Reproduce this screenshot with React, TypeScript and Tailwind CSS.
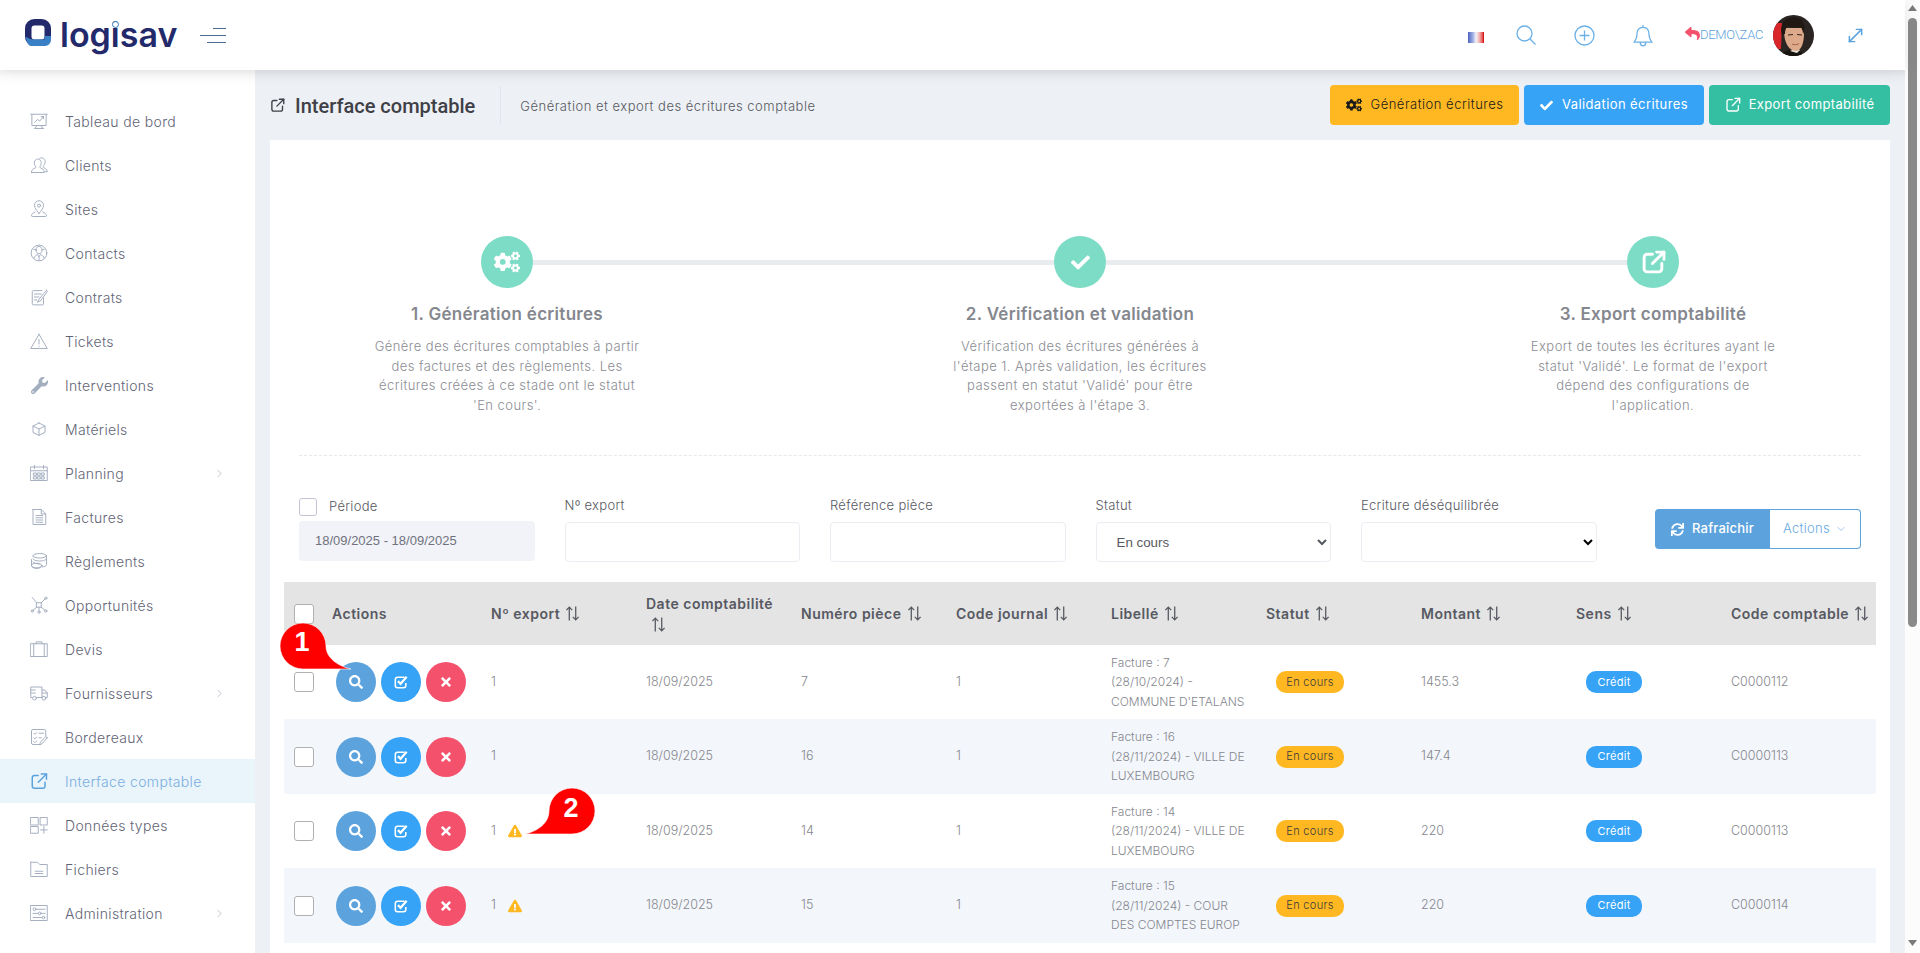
import { ChevronDown, ChevronRight, MoveDiagonal } from 'lucide-react'
import {
  FaCheck,
  FaCogs,
  FaExclamationTriangle,
  FaReply,
  FaSearch,
  FaSync,
  FaTimes,
  FaWrench,
} from 'react-icons/fa'
import type { ReactNode } from 'react'

function Thin({ children }: { children: ReactNode }) {
  return (
    <svg viewBox="0 0 24 24" className="w-[18px] h-[20px] shrink-0" fill="none" stroke="#a3aebf" strokeWidth={1.3} strokeLinecap="round" strokeLinejoin="round">
      {children}
    </svg>
  )
}

function ExternalIcon({ className, sw = 2.4 }: { className: string; sw?: number }) {
  return (
    <svg viewBox="0 0 24 24" className={className} fill="none" stroke="currentColor" strokeWidth={sw} strokeLinecap="round" strokeLinejoin="round">
      <path d="M11 4H6a3 3 0 0 0-3 3v11a3 3 0 0 0 3 3h11a3 3 0 0 0 3-3v-5" />
      <path d="M22 2 11 13" />
      <path d="M15 2h7v7" />
    </svg>
  )
}

function CheckSquareIcon() {
  return (
    <svg viewBox="0 0 16 16" className="w-[14px] h-[14px]" fill="none" stroke="currentColor">
      <path d="M12 2.500H4A2.500 2.500 0 0 0 1.500 5v7A2.500 2.500 0 0 0 4 14.500h7a2.500 2.500 0 0 0 2.500-2.500V9" strokeWidth={1.8} />
      <path d="m4.500 7 3 3 7-8" strokeWidth={2.6} />
    </svg>
  )
}

const sideIcons: Record<string, ReactNode> = {
  board: (
    <Thin>
      <path d="M1 3h22M2.500 3v15h19V3M9 18l-2 4M15 18l2 4M6 22h12" />
      <path d="m6 14 4-4 3 2 5-6M15 6h3v3" />
    </Thin>
  ),
  clients: (
    <Thin>
      <path d="M2 22c0-4 2-5 5-6 1-1 1-2 0-3-2-2-2-8 3-9 5 0 6 6 4 9-1 1-1 2 0 3 3 1 5 2 5 6H2Z" />
      <path d="M13 3c4-2 8 1 7 6-.3 2-1 3-2 4s0 2 1 3c2 1 4 2 4 5h-3" />
    </Thin>
  ),
  sites: (
    <Thin>
      <path d="M12 18c-3-4-6-7-6-11a6 6 0 0 1 12 0c0 4-3 7-6 11Z" />
      <circle cx="12" cy="7.500" r="2" />
      <path d="M7 16c-3 1-5 3-5 5 0 1 1 1 2 1h16c1 0 2 0 2-1 0-2-2-4-5-5" />
    </Thin>
  ),
  contacts: (
    <Thin>
      <circle cx="12" cy="12" r="10.500" />
      <path d="M8 8c0-3 2-5 4-5s4 2 4 5-2 5-4 5-4-2-4-5ZM5 19c1-3 3-4 5-5l2 3 2-3c2 1 4 2 5 5M12 17v5M5 7l3 1M19 7l-3 1" />
    </Thin>
  ),
  contracts: (
    <Thin>
      <path d="M18 13v8a1.500 1.500 0 0 1-1.500 1.500h-12A1.500 1.500 0 0 1 3 21V5a1.500 1.500 0 0 1 1.500-1.500H16" />
      <path d="M6 8h9M6 12h6M6 16h3M22 3l-10 12-2 4 4-2L23 5l-1-2Z" />
    </Thin>
  ),
  tickets: (
    <Thin>
      <path d="M12 3 1 22h22L12 3Z" />
      <path d="M12 10v6M12 19v.4" />
    </Thin>
  ),
  material: (
    <Thin>
      <path d="m12 4 8 4v8.500l-8 4-8-4V8l8-4Z" />
      <path d="m4 8 8 4 8-4M12 12v8.500" />
    </Thin>
  ),
  planning: (
    <Thin>
      <path d="M1 4h22v18H1zM1 9h22M6 2v4M18 2v4" />
      <path d="M5 12h3.500v3H5zM10.200 12h3.500v3h-3.500zM15.500 12H19v3h-3.500zM5 17h3.500v3H5zM10.200 17h3.500v3h-3.500zM15.500 17H19v3h-3.500z" />
    </Thin>
  ),
  bills: (
    <Thin>
      <path d="M4 2h11l6 6v14H4V2Z" />
      <path d="M15 2v6h6M8 10h9M8 13h9M8 16h9M8 19h9" />
    </Thin>
  ),
  payments: (
    <Thin>
      <ellipse cx="13" cy="5" rx="9" ry="3" />
      <path d="M22 5v12c0 1.500-3 3-6 3M4 6v0M4 9c0 1.500 4 3 9 3s9-1.500 9-3M4 13c0 1.500 4 3 9 3" />
      <ellipse cx="9" cy="18" rx="7" ry="3" />
      <path d="M2 10v8c0 2 3 4 7 4s7-2 7-4" />
    </Thin>
  ),
  network: (
    <Thin>
      <rect x="9" y="9" width="6" height="6" />
      <circle cx="21" cy="3" r="1.500" />
      <circle cx="3" cy="20" r="1.500" />
      <circle cx="21" cy="20" r="1.500" />
      <circle cx="12" cy="21.500" r="1.500" />
      <path d="m15 9 5-5M3 2l6 7M9 15l-5 4M15 15l5 4M12 15v5" />
    </Thin>
  ),
  quotes: (
    <Thin>
      <path d="M1 5h22v17H1zM5 5v17M19 5v17M8 5V2.500h8V5" />
    </Thin>
  ),
  suppliers: (
    <Thin>
      <path d="M16 18H9M3 18H1V4h15v14M16 8h4l3 4v6h-2" />
      <circle cx="6" cy="19" r="2.500" />
      <circle cx="18.500" cy="19" r="2.500" />
      <path d="M1 8h6M1 12h6M16 12h7" />
    </Thin>
  ),
  slips: (
    <Thin>
      <path d="M21 11V4a2 2 0 0 0-2-2H4a2 2 0 0 0-2 2v16a2 2 0 0 0 2 2h9" />
      <path d="m5 7 1.500 1.500L9 6M12 7h6M5 13l1.500 1.500L9 12M12 13h3M5 18l1.500 1.500L9 17" />
      <path d="m23 13-7 8-3 1.500.8-3.500 7-7.500 2.200 1.500Z" />
    </Thin>
  ),
  types: (
    <Thin>
      <path d="M1 2h10v10H1zM14 2h9v10h-9zM1 14h10v9H1zM18.500 14v9M14 18.500h9" />
    </Thin>
  ),
  files: (
    <Thin>
      <path d="M1 3h9l3 3h10v16H1V3Z" />
      <path d="M7 15h10M7 18h10" />
    </Thin>
  ),
  admin: (
    <Thin>
      <path d="M1 2h22v20H1z" />
      <circle cx="6" cy="7" r="1.800" />
      <circle cx="13" cy="12.500" r="1.800" />
      <circle cx="18" cy="18" r="1.800" />
      <path d="M8 7h12M4 12.500h7M15 12.500h5M4 18h12" />
    </Thin>
  ),
}

const sideItems = [
  { label: 'Tableau de bord', icon: 'board' },
  { label: 'Clients', icon: 'clients' },
  { label: 'Sites', icon: 'sites' },
  { label: 'Contacts', icon: 'contacts' },
  { label: 'Contrats', icon: 'contracts' },
  { label: 'Tickets', icon: 'tickets' },
  { label: 'Interventions', icon: 'wrench' },
  { label: 'Matériels', icon: 'material' },
  { label: 'Planning', icon: 'planning', more: true },
  { label: 'Factures', icon: 'bills' },
  { label: 'Règlements', icon: 'payments' },
  { label: 'Opportunités', icon: 'network' },
  { label: 'Devis', icon: 'quotes' },
  { label: 'Fournisseurs', icon: 'suppliers', more: true },
  { label: 'Bordereaux', icon: 'slips' },
  { label: 'Interface comptable', icon: 'external', active: true },
  { label: 'Données types', icon: 'types' },
  { label: 'Fichiers', icon: 'files' },
  { label: 'Administration', icon: 'admin', more: true },
]

const columns = ['Nº export', 'Date comptabilité', 'Numéro pièce', 'Code journal', 'Libellé', 'Statut', 'Montant', 'Sens', 'Code comptable']

const rows = [
  { warn: false, piece: '7', label: ['Facture : 7', '(28/10/2024) -', "COMMUNE D'ETALANS"], amount: '1455.3', code: 'C0000112', h: 'h-[74px]' },
  { warn: false, piece: '16', label: ['Facture : 16', '(28/11/2024) - VILLE DE', 'LUXEMBOURG'], amount: '147.4', code: 'C0000113', h: 'h-[75px]' },
  { warn: true, piece: '14', label: ['Facture : 14', '(28/11/2024) - VILLE DE', 'LUXEMBOURG'], amount: '220', code: 'C0000113', h: 'h-[74px]' },
  { warn: true, piece: '15', label: ['Facture : 15', '(28/11/2024) - COUR', 'DES COMPTES EUROP'], amount: '220', code: 'C0000114', h: 'h-[75px]' },
]

const steps = [
  {
    title: '1. Génération écritures',
    lines: ['Génère des écritures comptables à partir', 'des factures et des règlements. Les', 'écritures créées à ce stade ont le statut', "'En cours'."],
  },
  {
    title: '2. Vérification et validation',
    lines: ["Vérification des écritures générées à", "l'étape 1. Après validation, les écritures", "passent en statut 'Validé' pour être", "exportées à l'étape 3."],
  },
  {
    title: '3. Export comptabilité',
    lines: ["Export de toutes les écritures ayant le", "statut 'Validé'. Le format de l'export", 'dépend des configurations de', "l'application."],
  },
]

function SortIcon() {
  return (
    <svg viewBox="0 0 14 14" className="inline-block w-[15px] h-[15px] ml-[5px] align-[-2px]" fill="none" stroke="#575962" strokeWidth={1.2}>
      <path d="M4 13.500V1M1.300 3.800 4 1l2.700 2.800M10 .5V13M7.300 10.200 10 13l2.700-2.800" />
    </svg>
  )
}

function Filter({ label, children }: { label: string; children: ReactNode }) {
  return (
    <div className="w-[235.500px] shrink-0">
      <div className="h-[18px] mb-[6px] text-[13px] leading-[15px] font-light tracking-[0.3px] text-[#575962]">{label}</div>
      {children}
    </div>
  )
}

function Avatar() {
  return (
    <div className="w-[41px] h-[41px] rounded-full overflow-hidden shrink-0">
      <svg viewBox="0 0 41 41" className="w-full h-full">
        <rect width="41" height="41" fill="#2a2422" />
        <path d="M0 8h9l-1 26H0z" fill="#d8262a" />
        <path d="M8 41c2-5 6-6 12-6s9 2 11 6z" fill="#17130f" />
        <path d="M17 36l7 2 3-3-3-2z" fill="#e8e4de" />
        <path d="M11 16c0 10 4 20 12 20 5 0 8-8 8-17l-2-6H13z" fill="#dcaa8a" />
        <path d="M9 20c-3-10 2-17 11-18 8 0 13 5 11 14l-1 3c0-3-1-6-3-7-4 1-8 1-12-1-2 1-3 4-3 8z" fill="#211814" />
        <path d="M15 20l5-.5M24 19.500l5 .5" stroke="#3a241b" strokeWidth={1.2} />
        <path d="M19 29c2 1 5 1 7-.5" stroke="#a4604c" strokeWidth={1} fill="none" />
      </svg>
    </div>
  )
}

function Sidebar() {
  return (
    <aside className="w-[255px] shrink-0 bg-white pt-[29px] shadow-[inset_0_12px_12px_-12px_rgba(69,65,78,0.12)]">
      {sideItems.map((item) => (
        <div key={item.label} className={`h-[44px] flex items-center pl-[30px] pr-[29px] ${item.active ? 'bg-[#e9f4fb]' : ''}`}>
          <span className="w-[18px] flex justify-center shrink-0">
            {item.icon === 'wrench' ? (
              <FaWrench className="text-[#a3aebf] text-[17px]" />
            ) : item.icon === 'external' ? (
              <ExternalIcon className="w-[19px] h-[19px] text-[#5ca3dd]" sw={2} />
            ) : (
              sideIcons[item.icon]
            )}
          </span>
          <span className={`ml-[17px] flex-1 text-[14px] font-light tracking-[0.35px] ${item.active ? 'text-[#7aaee0]' : 'text-[#5f6476]'}`}>{item.label}</span>
          {item.more && <ChevronRight size={13} strokeWidth={1.3} className="text-[#a8adb8]" />}
        </div>
      ))}
    </aside>
  )
}

function Header() {
  return (
    <header className="relative z-10 h-[70px] shrink-0 bg-white flex items-center shadow-[0_1px_15px_rgba(69,65,78,0.12)]">
      <div className="flex items-center pl-[25px] w-[255px]">
        <svg viewBox="0 0 26 27" className="w-[26px] h-[27px] mb-[5px] shrink-0">
          <rect x="3.250" y="3.250" width="19.500" height="20.500" rx="6" fill="none" stroke="#232a6b" strokeWidth={6.500} />
          <path d="M6 27h14a6 6 0 0 0 6-6v-4h-6.500v3.500H9c-3 0-6-1-8-3 0 4 2 9.500 5 9.500Z" fill="#3a80c6" />
        </svg>
        <span className="relative ml-[9px] w-[116px] text-[34px] leading-[40px] font-semibold text-[#232a6b] font-[Inter,sans-serif] whitespace-nowrap">
          logisav
          <span className="absolute left-[52px] top-[6px] w-[7px] h-[7px] rounded-full bg-white border-[1.500px] border-[#3a80c6]" />
        </span>
        <svg viewBox="0 0 26 15" className="w-[26px] h-[15px] ml-[24px] shrink-0" stroke="#4d6b8f" strokeWidth={1}>
          <path d="M13 .5h13M0 7.500h26M7 14.500h19" />
        </svg>
      </div>
      <div className="flex-1 flex items-center justify-end text-[#5ca3dd]">
        <svg viewBox="0 0 16 11" className="w-[16px] h-[11px] mt-[4px] shrink-0">
          <defs>
            <linearGradient id="flag" x1="0" x2="1" y1="0" y2="0">
              <stop offset="0" stopColor="#4a63c0" />
              <stop offset="0.33" stopColor="#a8b6e6" />
              <stop offset="0.5" stopColor="#f4f4f8" />
              <stop offset="0.72" stopColor="#f2b0b0" />
              <stop offset="1" stopColor="#e02020" />
            </linearGradient>
          </defs>
          <rect width="16" height="11" fill="url(#flag)" />
          <path d="M15.500 0v11" stroke="#d01818" strokeWidth={1} />
        </svg>
        <svg viewBox="0 0 20 20" className="w-[20px] h-[20px] ml-[32px]" fill="none" stroke="#6bb0e6" strokeWidth={1.3}>
          <circle cx="8.500" cy="8.500" r="7.500" />
          <path d="m14 14 5.500 5.500" />
        </svg>
        <svg viewBox="0 0 21 21" className="w-[21px] h-[21px] ml-[38px]" fill="none" stroke="#6bb0e6" strokeWidth={1.3}>
          <circle cx="10.500" cy="10.500" r="9.500" />
          <path d="M10.500 5.500v10M5.500 10.500h10" />
        </svg>
        <svg viewBox="0 0 18 21" className="w-[20px] h-[23px] ml-[38px] mr-[-1px]" fill="none" stroke="#6bb0e6" strokeWidth={1.2}>
          <path d="M9 3c-4 0-5.500 3-5.500 6.500 0 4-1.500 5.500-2.500 7h16c-1-1.500-2.500-3-2.500-7C14.500 6 13 3 9 3ZM9 3V1M6.500 17c0 2 1 3 2.500 3s2.500-1 2.500-3" />
        </svg>
        <FaReply className="ml-[33px] text-[15px] text-[#f4516c] mb-[4px]" />
        <span className="text-[13px] font-[Roboto,sans-serif] font-light text-[#5ca3dd] mb-[1px] w-[63px] whitespace-nowrap tracking-[-0.3px]">DEMO\ZAC</span>
        <span className="ml-[10px]">
          <Avatar />
        </span>
        <MoveDiagonal size={21} strokeWidth={1.7} className="ml-[31px] mr-[39px] text-[#5ca3dd]" />
      </div>
    </header>
  )
}

function Steps() {
  return (
    <>
      <div className="flex items-center pl-[211px] pr-[211px] pt-[96px]">
        <div className="w-[52px] h-[52px] rounded-full bg-[#7ddcc6] flex items-center justify-center shrink-0">
          <FaCogs className="text-white text-[26px]" />
        </div>
        <div className="flex-1 h-[5px] bg-[#e8ecef]" />
        <div className="w-[52px] h-[52px] rounded-full bg-[#7ddcc6] flex items-center justify-center shrink-0">
          <FaCheck className="text-white text-[19px]" />
        </div>
        <div className="flex-1 h-[5px] bg-[#e8ecef]" />
        <div className="w-[52px] h-[52px] rounded-full bg-[#7ddcc6] flex items-center justify-center shrink-0 text-white">
          <ExternalIcon className="w-[25px] h-[25px]" sw={2.8} />
        </div>
      </div>
      <div className="flex justify-between px-[87px] mt-[14px]">
        {steps.map((step) => (
          <div key={step.title} className="w-[300px] text-center">
            <div className="h-[24px] leading-[24px] text-[17px] font-semibold tracking-[0.3px] text-[#85878e]">{step.title}</div>
            <div className="mt-[11px] text-[13px] leading-[19.500px] font-light tracking-[0.45px] text-[#8b8d94]">
              {step.lines.map((line) => (
                <div key={line}>{line}</div>
              ))}
            </div>
          </div>
        ))}
      </div>
    </>
  )
}

function Filters() {
  const box = 'w-full h-[40px] bg-white border border-[#ebedf2] rounded-[4px]'
  return (
    <div className="flex items-start pl-[29px] mt-[42px] gap-[30px]">
      <div className="w-[235.500px] shrink-0">
        <div className="flex items-center h-[18px]">
          <span className="w-[18px] h-[18px] border border-[#bfc3d4] rounded-[3px] bg-white" />
          <span className="ml-[12px] text-[13px] font-light tracking-[0.3px] text-[#575962]">Période</span>
        </div>
        <div className="mt-[5px] h-[40px] bg-[#f2f3f8] rounded-[4px] pl-[16px] flex items-center text-[13px] text-[#6f727d] font-['Liberation_Sans',sans-serif]">
          18/09/2025 - 18/09/2025
        </div>
      </div>
      <Filter label="Nº export">
        <input className={box} />
      </Filter>
      <Filter label="Référence pièce">
        <input className={box} />
      </Filter>
      <Filter label="Statut">
        <select defaultValue="En cours" className={`${box} pl-[16px] text-[13.330px] text-[#575962] font-['Liberation_Sans',sans-serif]`}>
          <option>En cours</option>
        </select>
      </Filter>
      <Filter label="Ecriture déséquilibrée">
        <select className={box}>
          <option></option>
        </select>
      </Filter>
      <div className="flex ml-[28.500px] mt-[11px] h-[40px] shrink-0">
        <div className="w-[115px] bg-[#5ca3dd] rounded-l-[4px] flex items-center justify-center text-white text-[13px] font-medium tracking-[0.2px]">
          <FaSync className="text-[13px] mr-[8px]" />
          Rafraîchir
        </div>
        <div className="w-[91px] border border-[#5ca3dd] border-l-0 rounded-r-[4px] flex items-center justify-center text-[#6aaae2] text-[13px] font-light tracking-[0.3px]">
          Actions
          <ChevronDown size={12} strokeWidth={1.3} className="ml-[5px]" />
        </div>
      </div>
    </div>
  )
}

function Table() {
  return (
    <div className="pl-[14px] mt-[20px]">
      <table className="w-[1592px] table-fixed border-collapse">
        <colgroup>
          <col className="w-[38px]" />
          <col className="w-[159px]" />
          {columns.map((c) => (
            <col key={c} className="w-[155px]" />
          ))}
        </colgroup>
        <thead>
          <tr className="h-[63px] bg-[#e4e4e4] text-[#575962] text-[14px] tracking-[0.5px] text-left">
            <th className="pl-[10px]">
              <span className="block w-[20px] h-[20px] bg-white border border-[#b0b0b0] rounded-[3px]" />
            </th>
            <th className="pl-[10px] font-semibold">Actions</th>
            {columns.map((c) => (
              <th key={c} className="pl-[10px] pr-[4px] font-semibold leading-[21px]">
                {c}
                <SortIcon />
              </th>
            ))}
          </tr>
        </thead>
        <tbody className="text-[12.500px] font-light text-[#85878e]">
          {rows.map((row, i) => (
            <tr key={row.piece} className={`${row.h} ${i % 2 ? 'bg-[#f3f6fb]' : 'bg-white'}`}>
              <td className="pl-[10px]">
                <span className="block w-[20px] h-[20px] bg-white border border-[#b0b0b0] rounded-[3px]" />
              </td>
              <td className="pl-[14px]">
                <div className="flex gap-[5px]">
                  <span className="w-[40px] h-[40px] rounded-full bg-[#5ca3dd] flex items-center justify-center text-white">
                    <FaSearch className="text-[14px]" />
                  </span>
                  <span className="w-[40px] h-[40px] rounded-full bg-[#36a3f7] flex items-center justify-center text-white">
                    <CheckSquareIcon />
                  </span>
                  <span className="w-[40px] h-[40px] rounded-full bg-[#f4516c] flex items-center justify-center text-white">
                    <FaTimes className="text-[14px]" />
                  </span>
                </div>
              </td>
              <td className="pl-[10px]">
                <div className="flex items-center">
                  1
                  {row.warn && <FaExclamationTriangle className="ml-[12px] text-[14px] text-[#ffb822]" />}
                </div>
              </td>
              <td className="pl-[10px]">18/09/2025</td>
              <td className="pl-[10px]">{row.piece}</td>
              <td className="pl-[10px]">1</td>
              <td className="pl-[10px] text-[12px] leading-[19.500px] whitespace-nowrap">
                {row.label.map((line) => (
                  <div key={line}>{line}</div>
                ))}
              </td>
              <td className="pl-[20px]">
                <span className="inline-flex items-center justify-center w-[68px] h-[22px] rounded-[10px] bg-[#ffb822] text-[#3b3b3b] text-[11px] font-light tracking-[0.3px]">En cours</span>
              </td>
              <td className="pl-[10px]">{row.amount}</td>
              <td className="pl-[20px]">
                <span className="inline-flex items-center justify-center w-[56px] h-[22px] rounded-[10px] bg-[#36a3f7] text-white text-[11px] font-normal tracking-[0.3px]">Crédit</span>
              </td>
              <td className="pl-[10px]">{row.code}</td>
            </tr>
          ))}
        </tbody>
      </table>
    </div>
  )
}

export default function App() {
  return (
    <div className='relative h-screen flex overflow-hidden bg-[#edf0f4] font-[Inter,"Liberation_Sans",sans-serif]'>
      <div className="flex-1 min-w-0 flex flex-col">
        <Header />
        <div className="flex-1 flex min-h-0">
          <Sidebar />
          <main className="flex-1 min-w-0 px-[15px] pt-[15px] overflow-hidden shadow-[inset_0_12px_12px_-12px_rgba(69,65,78,0.12)]">
            <div className="flex items-center h-[40px]">
              <ExternalIcon className="w-[15px] h-[15px] text-[#3f4047]" sw={2.2} />
              <h1 className="ml-[10px] mt-[1px] text-[20px] font-medium text-[#3f4047] font-[Roboto,sans-serif] whitespace-nowrap">Interface comptable</h1>
              <span className="ml-[25px] w-px h-[38px] bg-[#e2e5ec]" />
              <span className="ml-[19px] mt-[4px] flex-1 text-[13px] font-light tracking-[0.5px] text-[#575962]">Génération et export des écritures comptable</span>
              <div className="flex gap-[5px] text-[13px]">
                <div className="w-[189px] h-[40px] rounded-[4px] bg-[#ffb822] text-[#1a1a1a] flex items-center justify-center font-light tracking-[0.5px]">
                  <FaCogs className="text-[16px] mr-[9px]" />
                  Génération écritures
                </div>
                <div className="w-[180px] h-[40px] rounded-[4px] bg-[#36a3f7] text-white flex items-center justify-center tracking-[0.4px]">
                  <FaCheck className="text-[13px] mr-[9px]" />
                  Validation écritures
                </div>
                <div className="w-[181px] h-[40px] rounded-[4px] bg-[#34bfa3] text-white flex items-center justify-center tracking-[0.35px]">
                  <ExternalIcon className="w-[16px] h-[16px] mr-[8px]" sw={2} />
                  Export comptabilité
                </div>
              </div>
            </div>
            <div className="mt-[15px] bg-white w-[1620px] h-[900px]">
              <Steps />
              <div className="mx-[29px] mt-[40px] border-t border-dashed border-[#e6e8ee]" />
              <Filters />
              <Table />
            </div>
          </main>
        </div>
      </div>

      <div className="w-[15px] shrink-0 bg-[#fcfcfc] flex flex-col items-center">
        <svg viewBox="0 0 9 6" className="w-[9px] h-[6px] mt-[5px] shrink-0">
          <path d="M4.500 0 9 6H0z" fill="#7a7a7a" />
        </svg>
        <div className="w-[9px] h-[609px] mt-[7px] rounded-full bg-[#8a8a8a]" />
        <svg viewBox="0 0 9 6" className="w-[9px] h-[6px] mt-auto mb-[7px] shrink-0">
          <path d="M4.500 6 9 0H0z" fill="#7a7a7a" />
        </svg>
      </div>

      {/* numbered callouts pasted over the table */}
      <svg viewBox="0 0 1920 953" className="absolute inset-0 w-[1920px] h-[953px] pointer-events-none" fill="#ff0000">
        <path d="M351 669 303 669A23 23 0 1 1 326 646C326 658 338 666 351 669Z" stroke="#fff" strokeWidth={0.6} />
        <path d="M525 834 572 834A23 23 0 1 0 549 811C549 823 538 831 525 834Z" stroke="#fff" strokeWidth={0.6} />
      </svg>
      <span className="absolute left-[294px] top-[630px] w-[16px] text-center text-[27px] leading-[24px] font-bold text-white font-['Liberation_Sans',sans-serif]">1</span>
      <span className="absolute left-[563px] top-[796px] w-[16px] text-center text-[27px] leading-[24px] font-bold text-white font-['Liberation_Sans',sans-serif]">2</span>
    </div>
  )
}
